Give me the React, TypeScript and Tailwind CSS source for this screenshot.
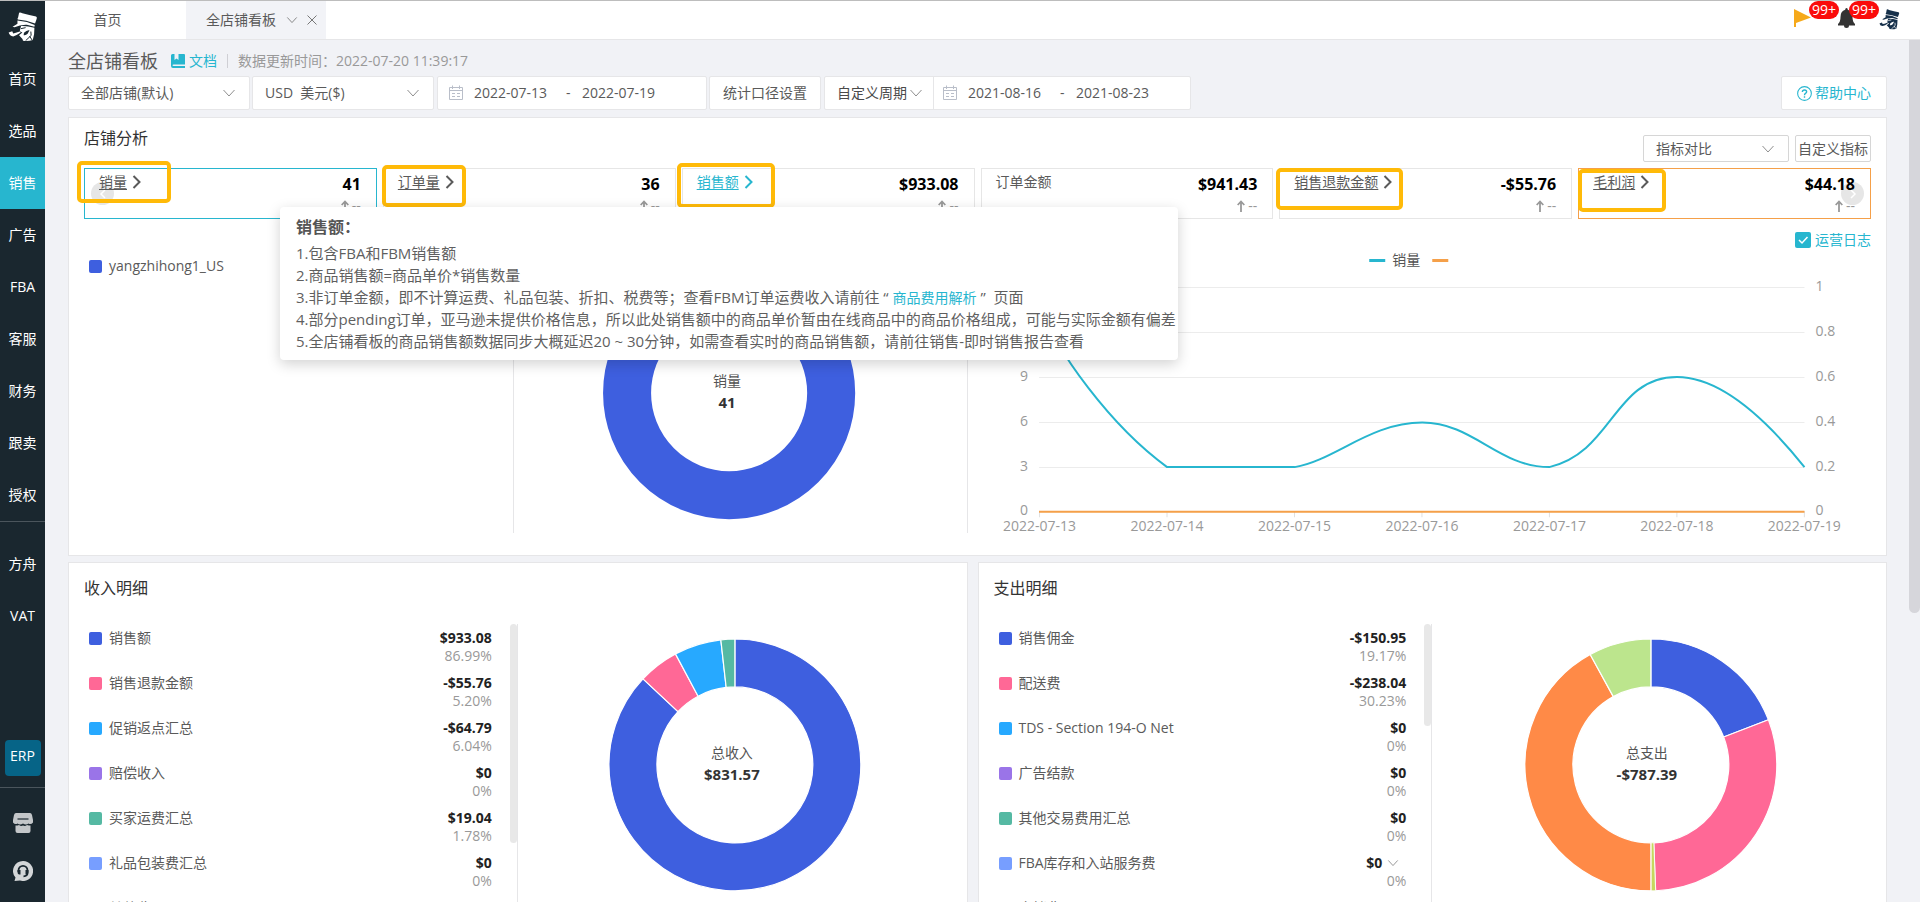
import React from "react";

const TEXT = "font-['Open_Sans','Noto_Sans_CJK_SC',sans-serif]";

/* ---------- icons ---------- */

function Logo({ className, hole }: { className: string; hole: string }) {
  return (
    <svg viewBox="22 36 92 92" className={className} aria-hidden="true">
      <path fill="currentColor" d="M56 38 Q60 36 66 40 Q88 46 108 50 Q112 52 110 57 L105 71 L78 63 L52 59 Q50 56 53 53 Z" />
      <path fill="currentColor" d="M51 62 L80 67 L104 76 L103 81 L80 75 Q60 74 42 83 L36 81 Q44 77 51 72 Z" />
      <path fill="currentColor" d="M62 79 Q80 78 103 84 L102 104 L98 122 Q84 126 68 124 Q68 118 62 114 L56 107 L66 99 L58 95 Z" />
      <path fill={hole} d="M71 100 Q80 90 88 92 L82 103 Q76 109 70 107 Z" />
      <path stroke={hole} strokeWidth="3" fill="none" d="M76 124 L93 108 L92 96 M88 110 L96 122 M62 87 L76 84" />
      <path fill="currentColor" d="M24 99 L35 95 L38 102 Q44 101 58 96 L61 99 Q48 108 38 111 Q27 110 24 99 Z" />
    </svg>
  );
}

function ChevronDown({ className }: { className: string }) {
  return (
    <svg viewBox="0 0 14 14" className={className} fill="none" stroke="currentColor" aria-hidden="true">
      <path d="M1.5 4 L7 10 L12.5 4" />
    </svg>
  );
}

function CalendarIcon() {
  return (
    <svg viewBox="0 0 16 16" className="mr-[2px] size-4 shrink-0 text-[#b9bec9]" fill="none" stroke="currentColor" aria-hidden="true">
      <path d="M1.5 2.5 H14.5 V14.5 H1.5 Z M1.5 5.5 H14.5 M4.5 0.5 V4 M11.5 0.5 V4 M4 8.5 H7 M9 8.5 H12 M4 11.5 H7 M9 11.5 H12" />
    </svg>
  );
}

function DocIcon() {
  return (
    <svg viewBox="0 0 14 14" className="size-[14px] text-[#27b6cf]" aria-hidden="true">
      <path fill="currentColor" d="M1.5 0 H3.5 V6 L5.5 4.5 L7.5 6 V0 H13 Q14 0 14 1 V10.5 H2.5 Q1.5 10.5 1.5 11.3 Q1.5 12 2.5 12 H14 V14 H2 Q0 14 0 12 V1.5 Q0 0 1.5 0 Z" />
    </svg>
  );
}

/* ---------- sidebar ---------- */

const NAV = ["首页", "选品", "销售", "广告", "FBA", "客服", "财务", "跟卖", "授权"];

function NavItem({ label, active }: { label: string; active?: boolean }) {
  return (
    <a
      href="#"
      className={
        active
          ? "flex h-[52px] items-center justify-center bg-[#27b6cf] text-sm text-white"
          : "flex h-[52px] items-center justify-center text-sm text-white"
      }
    >
      {label}
    </a>
  );
}

function Sidebar() {
  return (
    <nav className="flex w-[45px] shrink-0 flex-col bg-[#1a272f]">
      <div className="flex h-[52px] shrink-0 items-center justify-center">
        <Logo className="size-[30px] text-white" hole="#1a272f" />
      </div>
      {NAV.map((n) => (
        <NavItem key={n} label={n} active={n === "销售"} />
      ))}
      <div className="mb-4 border-t border-[#4b555c]" />
      <NavItem label="方舟" />
      <NavItem label="VAT" />
      <div className="mt-auto flex flex-col items-center">
        <a href="#" className="mb-[11px] flex size-9 items-center justify-center rounded-[4px] bg-[#066487] pb-1 text-sm text-white">
          ERP
        </a>
        <div className="w-full border-t border-[#4b555c]" />
        <a href="#" aria-label="店铺" className="mt-[25px]">
          <svg viewBox="0 0 20 20" className="size-5 text-[#c3c6c9]" aria-hidden="true">
            <path fill="currentColor" d="M3 0 H17 Q18.500 0 19 2 L20 7 V9.500 Q18 12 15.500 10.500 Q13 12.500 10 10.500 Q7 12.500 4.500 10.500 Q2 12 0 9.500 V7 L1 2 Q1.500 0 3 0 Z" />
            <path fill="currentColor" d="M2.500 12.500 Q5 12.500 6 12 Q8 13.500 10 12.500 Q12 13.500 14 12 Q16 12.500 17.500 12.500 V18 Q17.500 20 15.500 20 H4.500 Q2.500 20 2.500 18 Z" />
            <path stroke="#1a272f" strokeWidth="1.200" d="M4.500 6 H15.500" />
          </svg>
        </a>
        <a href="#" aria-label="在线客服" className="mt-[28px] mb-[21px]">
          <svg viewBox="0 0 20 20" className="size-5" aria-hidden="true">
            <path fill="#d3d6d8" d="M10 0 A10 10 0 1 1 7 19.500 L1.500 20 L2.500 16.500 A10 10 0 0 1 10 0 Z" />
            <path fill="none" stroke="#1a272f" strokeWidth="1.800" d="M5.500 11 V9.500 A4.500 4.700 0 0 1 14.500 9.500 V12 Q14.500 15 10.500 15.300" />
            <path fill="#1a272f" d="M4.500 9 H7.500 V13.500 H6 Q4.500 13 4.500 11 Z M12.500 9 H15.500 V11 Q15.500 13 14 13.500 H12.500 Z" />
          </svg>
        </a>
      </div>
    </nav>
  );
}

/* ---------- header ---------- */

function Header() {
  return (
    <header className="flex h-[39px] shrink-0 items-stretch border-b border-[#e6e6e8] bg-white text-sm text-[#5a5a5a]">
      <a href="#" className="flex w-[141px] items-center justify-center pr-4">
        首页
      </a>
      <div className="flex w-[140px] items-center bg-[#f2f3f7] pl-5">
        <a href="#">全店铺看板</a>
        <button type="button" aria-label="展开" className="ml-[10px]">
          <ChevronDown className="size-3 text-[#777]" />
        </button>
        <button type="button" aria-label="关闭" className="ml-[8px]">
          <svg viewBox="0 0 12 12" className="size-3 text-[#777]" fill="none" stroke="currentColor" aria-hidden="true">
            <path d="M1.500 1.500 L10.500 10.500 M10.500 1.500 L1.500 10.500" />
          </svg>
        </button>
      </div>
      <div className="ml-auto flex items-start pr-5">
        <a href="#" aria-label="公告" className="relative mt-[8px] mr-[27px]">
          <svg viewBox="0 0 17 18" className="h-[18px] w-[17px] text-[#f6a91b]" aria-hidden="true">
            <path fill="currentColor" d="M0 0 L17 8.500 L2 14 V18 H0 Z" />
          </svg>
          <span className="absolute -top-[8px] left-[15px] flex h-[18px] w-[30px] items-center justify-center rounded-full bg-[#fa0b0b] text-sm text-white">
            99+
          </span>
        </a>
        <a href="#" aria-label="通知" className="relative mt-[7px] mr-[24px]">
          <svg viewBox="0 0 17 20" className="h-5 w-[17px] text-[#333]" aria-hidden="true">
            <path fill="currentColor" d="M8.500 0 Q9.800 0 9.800 1.800 Q14.500 3 14.500 9 Q14.500 14 17 16 V17.500 H11 Q11 20 8.500 20 Q6 20 6 17.500 H0 V16 Q2.500 14 2.500 9 Q2.500 3 7.200 1.800 Q7.200 0 8.500 0 Z" />
          </svg>
          <span className="absolute -top-[7px] left-[11px] flex h-[18px] w-[30px] items-center justify-center rounded-full bg-[#fa0b0b] text-sm text-white">
            99+
          </span>
        </a>
        <a href="#" aria-label="账户" className="mt-[8px]">
          <Logo className="size-[21px] text-[#16304a]" hole="#ffffff" />
        </a>
      </div>
    </header>
  );
}

/* ---------- filters ---------- */

function SelectBox({ label, value, className }: { label: string; value: string; className: string }) {
  return (
    <div className={className}>
      <select aria-label={label} className="h-full w-full appearance-none bg-transparent pl-3 text-sm text-[#5a5a5a] outline-none">
        <option>{value}</option>
      </select>
      <ChevronDown className="pointer-events-none absolute top-1/2 right-[13px] size-[14px] -translate-y-1/2 text-[#8f8f8f]" />
    </div>
  );
}

function DateRange({ name, from, to }: { name: string; from: string; to: string }) {
  return (
    <div className="flex items-center gap-2 text-sm text-[#5a5a5a]">
      <CalendarIcon />
      <input aria-label={name + "开始"} defaultValue={from} className="w-[84px] bg-transparent outline-none" />
      <span className="w-2">-</span>
      <input aria-label={name + "结束"} defaultValue={to} className="w-[84px] bg-transparent outline-none" />
    </div>
  );
}

function Filters() {
  const box = "rounded-[2px] border border-[#e6e6e8] bg-white";
  return (
    <div className="flex h-[34px] items-stretch text-sm text-[#5a5a5a]">
      <SelectBox label="店铺" value="全部店铺(默认)" className="relative w-[182px] rounded-[2px] border border-[#e6e6e8] bg-white" />
      <SelectBox label="币种" value={"USD\u00a0 美元($)"} className="relative ml-[2px] w-[182px] rounded-[2px] border border-[#e6e6e8] bg-white" />
      <div className={box + " ml-[3px] flex w-[270px] items-center pl-[10px]"}>
        <DateRange name="统计日期" from="2022-07-13" to="2022-07-19" />
      </div>
      <button type="button" className={box + " ml-[2px] w-[112px]"}>
        统计口径设置
      </button>
      <div className={box + " ml-[3px] flex w-[367px] items-stretch"}>
        <div className="relative flex w-[109px] items-center border-r border-[#e6e6e8]">
          <select aria-label="对比周期" className="h-full w-full appearance-none bg-transparent pl-3 text-[#4a4a4a] outline-none">
            <option>自定义周期</option>
          </select>
          <ChevronDown className="pointer-events-none absolute right-[10px] size-[14px] text-[#8f8f8f]" />
        </div>
        <div className="flex items-center pl-2">
          <DateRange name="对比日期" from="2021-08-16" to="2021-08-23" />
        </div>
      </div>
      <a href="#" className={box + " ml-auto flex w-[106px] items-center justify-center gap-[3px] text-[#27b6cf]"}>
        <svg viewBox="0 0 14 14" className="size-[15px]" fill="none" stroke="currentColor" aria-hidden="true">
          <circle cx="7" cy="7" r="6.400" />
          <path strokeWidth="1.300" d="M5 5.600 Q5 3.700 7 3.700 Q9 3.700 9 5.400 Q9 6.300 7.900 6.900 Q7 7.400 7 8.600 M7 9.600 V10.900" />
        </svg>
        帮助中心
      </a>
    </div>
  );
}

/* ---------- indicator cards ---------- */

type Card = { name: string; value: string; link?: boolean; border: string; color: string; mark?: string };

const CARDS: Card[] = [
  { name: "销量", value: "41", link: true, border: "border-[#27b6cf]", color: "text-[#5a5a5a]", mark: "-top-2 -left-2 h-[42px] w-[94px]" },
  { name: "订单量", value: "36", link: true, border: "border-[#e6e6e6]", color: "text-[#5a5a5a]", mark: "-top-1 -left-0.5 h-[42px] w-[84px]" },
  { name: "销售额", value: "$933.08", link: true, border: "border-[#e6e6e6]", color: "text-[#27b6cf]", mark: "-top-1.5 -left-1.5 h-[45px] w-[98px]" },
  { name: "订单金额", value: "$941.43", border: "border-[#e6e6e6]", color: "text-[#5a5a5a]" },
  { name: "销售退款金额", value: "-$55.76", link: true, border: "border-[#e6e6e6]", color: "text-[#5a5a5a]", mark: "-top-px -left-1 h-[42px] w-[127px]" },
  { name: "毛利润", value: "$44.18", link: true, border: "border-[#f5a049]", color: "text-[#5a5a5a]", mark: "top-0 -left-px h-[43px] w-[88px]" },
];

function IndicatorCard({ card, first, last }: { card: Card; first: boolean; last: boolean }) {
  return (
    <div className={"relative h-[51px] border bg-white pt-[3px] pr-[15px] pl-[14px] " + card.border}>
      {first && (
        <button type="button" aria-label="上一组" className="absolute top-[13px] left-[6px] flex size-[23px] items-center justify-center rounded-full bg-[#e6e6e6]">
          <svg viewBox="0 0 10 12" className="h-3 w-[10px]" fill="none" stroke="#fff" strokeWidth="1.500" aria-hidden="true">
            <path d="M7 2 L3 6 L7 10" />
          </svg>
        </button>
      )}
      {last && (
        <button type="button" aria-label="下一组" className="absolute top-[13px] right-[6px] flex size-[23px] items-center justify-center rounded-full bg-[#e6e6e6]">
          <svg viewBox="0 0 10 12" className="h-3 w-[10px]" fill="none" stroke="#fff" strokeWidth="1.500" aria-hidden="true">
            <path d="M3 2 L7 6 L3 10" />
          </svg>
        </button>
      )}
      <div className="relative flex items-start justify-between">
        {card.link ? (
          <a href="#" className={"flex items-center gap-[5px] text-sm leading-5 " + card.color}>
            <span className="underline underline-offset-2">{card.name}</span>
            <svg viewBox="0 0 9 14" className="h-[14px] w-[9px]" fill="none" stroke="currentColor" strokeWidth="2" aria-hidden="true">
              <path d="M1.500 1 L7.500 7 L1.500 13" />
            </svg>
          </a>
        ) : (
          <span className={"text-sm leading-5 " + card.color}>{card.name}</span>
        )}
        <strong className="text-base leading-6 font-bold text-black">{card.value}</strong>
      </div>
      <div className="relative flex h-5 items-center justify-end gap-[3px] text-sm text-[#999]">
        <svg viewBox="0 0 8 12" className="h-3 w-2" fill="none" stroke="currentColor" strokeWidth="1.800" aria-hidden="true">
          <path d="M4 12 V1.500 M0.700 5 L4 1.500 L7.300 5" />
        </svg>
        <span>--</span>
      </div>
      {card.mark && <div className={"pointer-events-none absolute rounded-[5px] border-4 border-[#ffba08] " + card.mark} />}
    </div>
  );
}

function MetricTooltip() {
  return (
    <div
      role="tooltip"
      className="absolute top-[89px] left-[211px] z-10 rounded-[4px] bg-white pt-[8px] pr-[2px] pb-[8px] pl-4 whitespace-nowrap text-[#5f5f5f] shadow-[0_4px_14px_rgba(0,0,0,0.18)]"
    >
      <h3 className="h-[27px] text-base leading-6 font-bold text-[#555]">销售额：</h3>
      <ul className="text-[15px] leading-[22px]">
        <li>1.包含FBA和FBM销售额</li>
        <li>2.商品销售额=商品单价*销售数量</li>
        <li>
          3.非订单金额，即不计算运费、礼品包装、折扣、税费等；查看FBM订单运费收入请前往 “
          <a href="#" className="mx-1 text-sm text-[#27b6cf]">
            商品费用解析
          </a>
          ”&nbsp; 页面
        </li>
        <li>4.部分pending订单，亚马逊未提供价格信息，所以此处销售额中的商品单价暂由在线商品中的商品价格组成，可能与实际金额有偏差</li>
        <li>5.全店铺看板的商品销售额数据同步大概延迟20 ~ 30分钟，如需查看实时的商品销售额，请前往销售-即时销售报告查看</li>
      </ul>
    </div>
  );
}

/* ---------- charts ---------- */

type Slice = { share: number; color: string };

function Donut({
  slices,
  cx,
  cy,
  tx,
  width,
  height,
  title,
  total,
}: {
  slices: Slice[];
  cx: number;
  cy: number;
  tx: number;
  width: number;
  height: number;
  title: string;
  total: string;
}) {
  const R = 126;
  const r = 78;
  const at = (p: number, rad: number) =>
    (cx + rad * Math.sin(p * 2 * Math.PI)).toFixed(2) + " " + (cy - rad * Math.cos(p * 2 * Math.PI)).toFixed(2);
  let start = 0;
  const sum = slices.reduce((s, x) => s + x.share, 0);
  return (
    <svg viewBox={"0 0 " + width + " " + height} className="w-full" role="img" aria-label={title + " " + total}>
      {slices.length === 1 ? (
        <circle cx={cx} cy={cy} r={(R + r) / 2} fill="none" stroke={slices[0].color} strokeWidth={R - r} />
      ) : (
        slices.map((s, i) => {
          const a = start;
          const b = start + s.share / sum;
          start = b;
          const big = b - a > 0.5 ? 1 : 0;
          return (
            <path
              key={i}
              fill={s.color}
              stroke="#fff"
              strokeWidth={s.share < 1 ? 0.8 : 1.2}
              d={`M${at(a, R)} A${R} ${R} 0 ${big} 1 ${at(b, R)} L${at(b, r)} A${r} ${r} 0 ${big} 0 ${at(a, r)} Z`}
            />
          );
        })
      )}
      <text x={tx} y={cy - 7} textAnchor="middle" className="fill-[#555] text-sm">
        {title}
      </text>
      <text x={tx} y={cy + 15} textAnchor="middle" className="fill-[#333] text-[15px] font-bold">
        {total}
      </text>
    </svg>
  );
}

const DAYS = ["2022-07-13", "2022-07-14", "2022-07-15", "2022-07-16", "2022-07-17", "2022-07-18", "2022-07-19"];
const GRID = [
  { y: 40, left: "", right: "1" },
  { y: 85, left: "", right: "0.8" },
  { y: 130, left: "9", right: "0.6" },
  { y: 175, left: "6", right: "0.4" },
  { y: 220, left: "3", right: "0.2" },
  { y: 264, left: "0", right: "0" },
];

function TrendChart() {
  return (
    <svg viewBox="0 2 902 288" className="w-full" role="img" aria-label="销量趋势">
      <rect x="401" y="12" width="16" height="3" fill="#27b6cf" />
      <text x="424" y="18" className="fill-[#555] text-sm">
        销量
      </text>
      <rect x="464" y="12" width="16" height="3" fill="#f5a049" />
      {GRID.map((g) => (
        <g key={g.y}>
          <path d={`M71 ${g.y + 0.5} H836`} stroke="#ececec" />
          {g.left && (
            <text x="60" y={g.y + 4} textAnchor="end" className="fill-[#999] text-sm">
              {g.left}
            </text>
          )}
          <text x="847" y={g.y + 4} className="fill-[#999] text-sm">
            {g.right}
          </text>
        </g>
      ))}
      {DAYS.map((d, i) => (
        <g key={d}>
          <path d={`M${71.5 + 127.4 * i} 264 V270`} stroke="#e0e0e0" />
          <text x={71.5 + 127.4 * i} y="284" textAnchor="middle" className="fill-[#999] text-sm">
            {d}
          </text>
        </g>
      ))}
      <path
        d="M71.500 56 C86 103 144 180 199 220 H326.500 C367 213 402 175.500 454 175.500 C505 175.500 530 220 581 220 C645 205 645 130 708.600 130 C752 130 796 170 836 220"
        fill="none"
        stroke="#27b6cf"
        strokeWidth="2"
      />
      <path d="M71 264.500 H836" stroke="#f5a049" strokeWidth="2" />
    </svg>
  );
}

/* ---------- detail panels ---------- */

type Row = { name: string; value: string; pct: string; swatch: string; more?: boolean };

const INCOME: Row[] = [
  { name: "销售额", value: "$933.08", pct: "86.99%", swatch: "bg-[#3e5fdf]" },
  { name: "销售退款金额", value: "-$55.76", pct: "5.20%", swatch: "bg-[#ff6896]" },
  { name: "促销返点汇总", value: "-$64.79", pct: "6.04%", swatch: "bg-[#27a9ff]" },
  { name: "赔偿收入", value: "$0", pct: "0%", swatch: "bg-[#9a74e8]" },
  { name: "买家运费汇总", value: "$19.04", pct: "1.78%", swatch: "bg-[#55b9a3]" },
  { name: "礼品包装费汇总", value: "$0", pct: "0%", swatch: "bg-[#779eff]" },
  { name: "其他收入", value: "$0", pct: "0%", swatch: "bg-[#c6d85e]" },
];

const EXPENSE: Row[] = [
  { name: "销售佣金", value: "-$150.95", pct: "19.17%", swatch: "bg-[#3e5fdf]" },
  { name: "配送费", value: "-$238.04", pct: "30.23%", swatch: "bg-[#ff6896]" },
  { name: "TDS - Section 194-O Net", value: "$0", pct: "0%", swatch: "bg-[#27a9ff]" },
  { name: "广告结款", value: "$0", pct: "0%", swatch: "bg-[#9a74e8]" },
  { name: "其他交易费用汇总", value: "$0", pct: "0%", swatch: "bg-[#55b9a3]" },
  { name: "FBA库存和入站服务费", value: "$0", pct: "0%", swatch: "bg-[#779eff]", more: true },
  { name: "仓储费", value: "$0", pct: "0%", swatch: "bg-[#c6d85e]", more: true },
];

function Swatch({ color }: { color: string }) {
  return <span className={"size-[13px] shrink-0 rounded-[2px] " + color} />;
}

function DetailPanel({ title, rows, thumb, children }: { title: string; rows: Row[]; thumb: string; children: React.ReactNode }) {
  return (
    <section className="border border-[#e6e6e8] bg-white">
      <h2 className="pl-[15px] text-base leading-[50px] text-[#333]">{title}</h2>
      <div className="mt-[11px] grid grid-cols-2">
        <div className="flex border-r border-[#e6e6e8] pl-[20px]">
          <ul className="flex-1 pt-[5px] pr-[18px]">
            {rows.map((r) => (
              <li key={r.name} className="flex h-[45px] items-start justify-between text-sm leading-[18px]">
                <span className="flex items-center gap-[7px] text-[#5a5a5a]">
                  <Swatch color={r.swatch} />
                  {r.name}
                </span>
                <span className="flex flex-col items-end">
                  <strong className="flex items-center gap-[5px] font-bold text-[#222]">
                    {r.value}
                    {r.more && <ChevronDown className="mr-[7px] size-3 text-[#888]" />}
                  </strong>
                  <span className="text-[#999]">{r.pct}</span>
                </span>
              </li>
            ))}
          </ul>
          <div className={"w-[7px] shrink-0 rounded-full bg-[#e8e8e8] " + thumb} />
        </div>
        <div>{children}</div>
      </div>
    </section>
  );
}

/* ---------- page ---------- */

function StoreAnalysis() {
  return (
    <section className="relative mt-[7px] border border-[#e6e6e8] bg-white px-[15px] pb-[18px]">
      <div className="flex h-[50px] items-start">
        <h2 className="text-base leading-10 text-[#333]">店铺分析</h2>
        <div className="ml-auto flex gap-[6px] pt-[17px]">
          <SelectBox label="指标对比" value="指标对比" className="relative h-[27px] w-[146px] rounded-[2px] border border-[#d6d6d6]" />
          <button type="button" className="h-[27px] w-[76px] rounded-[2px] border border-[#d6d6d6] text-sm whitespace-nowrap text-[#5a5a5a]">
            自定义指标
          </button>
        </div>
      </div>
      <div className="grid grid-cols-6 gap-[6px]">
        {CARDS.map((c, i) => (
          <IndicatorCard key={c.name} card={c} first={i === 0} last={i === CARDS.length - 1} />
        ))}
      </div>
      <div className="grid grid-cols-[430fr_454fr_902fr]">
        <div className="mb-1 border-r border-[#e6e6e8] pt-[38px] pl-[5px]">
          <div className="flex items-center gap-[7px] text-sm leading-[18px] text-[#5a5a5a]">
            <Swatch color="bg-[#3e5fdf]" />
            yangzhihong1_US
          </div>
        </div>
        <div className="mb-1 border-r border-[#e6e6e8]">
          <Donut slices={[{ share: 1, color: "#3e5fdf" }]} cx={215} cy={174} tx={213} width={453} height={308} title="销量" total="41" />
        </div>
        <div>
          <label className="flex h-[30px] items-end justify-end gap-1 text-sm text-[#27b6cf]">
            <span className="relative flex h-[18px] items-center">
              <input type="checkbox" defaultChecked className="size-4 appearance-none rounded-[2px] bg-[#27b6cf]" />
              <svg viewBox="0 0 16 16" className="pointer-events-none absolute size-4" fill="none" stroke="#fff" strokeWidth="1.500" aria-hidden="true">
                <path d="M4 8 L7 11 L12.500 5" />
              </svg>
            </span>
            <span className="leading-[18px]">运营日志</span>
          </label>
          <TrendChart />
        </div>
      </div>
      <MetricTooltip />
    </section>
  );
}

export default function App() {
  return (
    <div className={"flex h-screen flex-col overflow-hidden border-t border-[#bdbdbd] bg-[#f1f2f6] " + TEXT}>
      <div className="flex min-h-0 flex-1">
        <Sidebar />
        <div className="flex min-w-0 flex-1 flex-col">
          <Header />
          <div className="flex min-h-0 flex-1">
            <main className="min-w-0 flex-1 overflow-hidden pr-[22px] pl-[23px]">
              <div className="flex h-9 items-center pt-[6px] text-sm">
                <h1 className="text-lg text-[#5a5a5a]">全店铺看板</h1>
                <a href="#" className="ml-[13px] flex items-center gap-1 text-[#27b6cf]">
                  <DocIcon />
                  文档
                </a>
                <span className="mx-[10px] h-[14px] border-l border-[#cfcfd4]" />
                <span className="text-[#999]">数据更新时间：2022-07-20 11:39:17</span>
              </div>
              <Filters />
              <StoreAnalysis />
              <div className="mt-[6px] grid grid-cols-[900fr_910fr] gap-[10px] pb-4">
                <DetailPanel title="收入明细" rows={INCOME} thumb="h-[219px]">
                  <Donut
                    slices={[
                      { share: 86.99, color: "#3e5fdf" },
                      { share: 5.2, color: "#ff6896" },
                      { share: 6.04, color: "#27a9ff" },
                      { share: 1.78, color: "#55b9a3" },
                    ]}
                    cx={217}
                    cy={141}
                    tx={214}
                    width={449}
                    height={300}
                    title="总收入"
                    total="$831.57"
                  />
                </DetailPanel>
                <DetailPanel title="支出明细" rows={EXPENSE} thumb="h-[102px]">
                  <Donut
                    slices={[
                      { share: 19.17, color: "#3e5fdf" },
                      { share: 30.23, color: "#ff6896" },
                      { share: 0.6, color: "#c6d85e" },
                      { share: 42, color: "#ff8a47" },
                      { share: 8, color: "#bce58d" },
                    ]}
                    cx={219}
                    cy={141}
                    tx={215}
                    width={454}
                    height={300}
                    title="总支出"
                    total="-$787.39"
                  />
                </DetailPanel>
              </div>
            </main>
            <div className="w-[11px] shrink-0">
              <div className="h-[573px] rounded-b-full bg-[#d6d6db]" />
            </div>
          </div>
        </div>
      </div>
    </div>
  );
}
